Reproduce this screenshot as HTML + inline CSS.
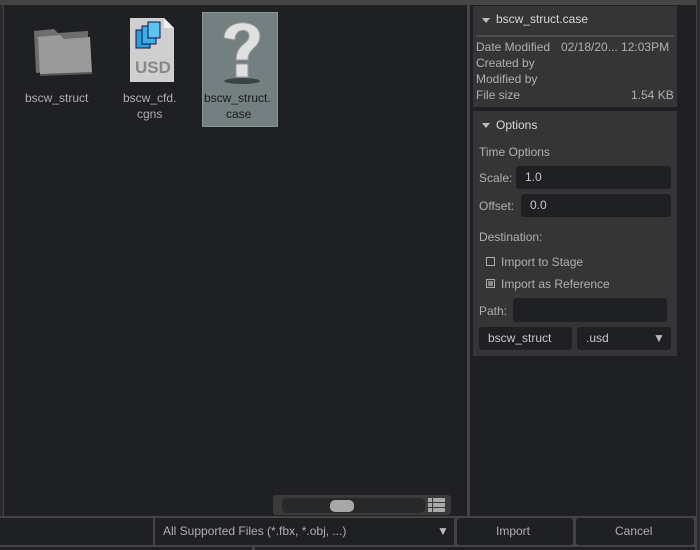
<!DOCTYPE html>
<html><head><style>
*{box-sizing:border-box;margin:0;padding:0}
body{width:700px;height:550px;background:#444;font-family:"Liberation Sans",sans-serif;font-size:12px;color:#b0b0b0;position:relative;overflow:hidden}
.a{position:absolute}
.dark{background:#1f2023}
.card{background:#353535}
.inp{background:#1f2023;border-radius:3px;color:#c8c8c8;padding-left:9px;line-height:23px}
.t{position:absolute;white-space:nowrap}
.tri{position:absolute;width:0;height:0;border-left:4px solid transparent;border-right:4px solid transparent;border-top:5px solid #bbb}
</style></head><body>
<div class="a dark" style="left:4px;top:5px;width:463px;height:511px"></div>
<div class="a" style="left:0;top:5px;width:3px;height:511px;background:#2a2a2c"></div>
<div class="a dark" style="left:470px;top:5px;width:226px;height:511px"></div>
<div class="a" style="left:697px;top:0;width:3px;height:550px;background:#2c2c2e"></div>

<div class="a" style="left:202px;top:12px;width:76px;height:115px;background:#737f80;border:1px solid #8a9596"></div>
<svg class="a" style="left:30px;top:25px" width="66" height="55" viewBox="0 0 66 55">
<path d="M4 6 L24 4 L28 8 L58 6 L58 44 L6 48 Z" fill="#6d6d6d"/>
<path d="M8 12 L30 10 L34 14 L60 12 L62 48 L10 50 Z" fill="#9a9a9a"/>
<path d="M10 50 L62 48" stroke="#555" stroke-width="2"/>
</svg>
<svg class="a" style="left:126px;top:16px" width="50" height="68" viewBox="0 0 50 68">
<path d="M4 2 L38 2 L48 12 L48 66 L4 66 Z" fill="#cfcfcf"/>
<path d="M38 2 L38 12 L48 12 Z" fill="#eee"/>
<rect x="10" y="14" width="14" height="18" fill="#2aa0d8" stroke="#114" stroke-width="1"/>
<rect x="16" y="10" width="14" height="18" fill="#3bb0e8" stroke="#114" stroke-width="1"/>
<rect x="22" y="6" width="12" height="16" fill="#5cc4f0" stroke="#114" stroke-width="1"/>
<text x="9" y="57" font-family="Liberation Sans" font-weight="bold" font-size="17" fill="#888">USD</text>
</svg>
<svg class="a" style="left:218px;top:18px" width="48" height="68" viewBox="0 0 48 68">
<ellipse cx="24" cy="63" rx="18" ry="3" fill="#3a4242"/>
<path d="M6 20 C6 0 42 0 42 18 C42 30 30 30 30 42 L18 42 C18 26 31 26 31 18 C31 10 17 10 17 22 Z" fill="#e0e0e0" stroke="#999"/>
<rect x="18" y="46" width="12" height="13" fill="#e0e0e0" stroke="#999"/>
</svg>
<div class="t" style="left:25px;top:91px">bscw_struct</div>
<div class="t" style="left:123px;top:91px">bscw_cfd.</div>
<div class="t" style="left:137px;top:107px">cgns</div>
<div class="t" style="left:204px;top:91px;color:#1a1a1a">bscw_struct.</div>
<div class="t" style="left:226px;top:107px;color:#1a1a1a">case</div>

<div class="a" style="left:273px;top:495px;width:178px;height:20px;background:#3a3a3a;border-radius:3px"></div>
<div class="a" style="left:282px;top:498px;width:143px;height:15px;background:#27282a;border-radius:5px"></div>
<div class="a" style="left:330px;top:500px;width:24px;height:12px;background:#a8a8a8;border-radius:5px"></div>
<svg class="a" style="left:428px;top:497px" width="18" height="16"><g fill="#aaa"><rect x="0" y="1" width="4" height="4"/><rect x="5" y="1" width="12" height="4"/><rect x="0" y="6" width="4" height="4"/><rect x="5" y="6" width="12" height="4"/><rect x="0" y="11" width="4" height="4"/><rect x="5" y="11" width="12" height="4"/></g></svg>

<div class="a card" style="left:473px;top:6px;width:204px;height:101px"></div>
<div class="tri" style="left:482px;top:18px"></div>
<div class="t" style="left:496px;top:12px;color:#d8d8d8">bscw_struct.case</div>
<div class="a" style="left:476px;top:35px;width:198px;height:2px;background:#4c4c4c"></div>
<div class="t" style="left:476px;top:40px">Date Modified</div>
<div class="t" style="left:561px;top:40px">02/18/20... 12:03PM</div>
<div class="t" style="left:476px;top:56px">Created by</div>
<div class="t" style="left:476px;top:72px">Modified by</div>
<div class="t" style="left:476px;top:88px">File size</div>
<div class="t" style="left:631px;top:88px">1.54 KB</div>

<div class="a card" style="left:473px;top:111px;width:204px;height:245px"></div>
<div class="tri" style="left:482px;top:123px"></div>
<div class="t" style="left:496px;top:118px;color:#d8d8d8">Options</div>
<div class="t" style="left:479px;top:145px">Time Options</div>
<div class="t" style="left:479px;top:171px">Scale:</div>
<div class="a inp" style="left:516px;top:166px;width:155px;height:23px">1.0</div>
<div class="t" style="left:479px;top:199px">Offset:</div>
<div class="a inp" style="left:521px;top:194px;width:150px;height:23px">0.0</div>
<div class="t" style="left:479px;top:230px">Destination:</div>
<div class="a" style="left:486px;top:257px;width:9px;height:9px;border:1px solid #aaa"></div>
<div class="t" style="left:501px;top:255px">Import to Stage</div>
<div class="a" style="left:486px;top:279px;width:9px;height:9px;border:1px solid #aaa;padding:1px"><div style="width:5px;height:5px;background:#888"></div></div>
<div class="t" style="left:501px;top:277px">Import as Reference</div>
<div class="t" style="left:479px;top:304px">Path:</div>
<div class="a inp" style="left:513px;top:298px;width:154px;height:24px"></div>
<div class="a inp" style="left:479px;top:327px;width:93px;height:23px">bscw_struct</div>
<div class="a inp" style="left:577px;top:327px;width:94px;height:23px">.usd</div>
<div class="t" style="left:653px;top:331px;font-size:12px;color:#bbb">▼</div>

<div class="a dark" style="left:0;top:518px;width:153px;height:27px"></div>
<div class="a dark" style="left:155px;top:518px;width:299px;height:27px"></div>
<div class="t" style="left:163px;top:524px">All Supported Files (*.fbx, *.obj, ...)</div>
<div class="t" style="left:437px;top:524px;color:#bbb">▼</div>
<div class="a dark" style="left:457px;top:518px;width:116px;height:27px;border-radius:3px"></div>
<div class="t" style="left:496px;top:524px">Import</div>
<div class="a dark" style="left:576px;top:518px;width:118px;height:27px;border-radius:3px"></div>
<div class="t" style="left:615px;top:524px">Cancel</div>
<div class="a dark" style="left:0;top:547px;width:252px;height:3px"></div>
<div class="a dark" style="left:255px;top:547px;width:440px;height:3px"></div>
</body></html>
